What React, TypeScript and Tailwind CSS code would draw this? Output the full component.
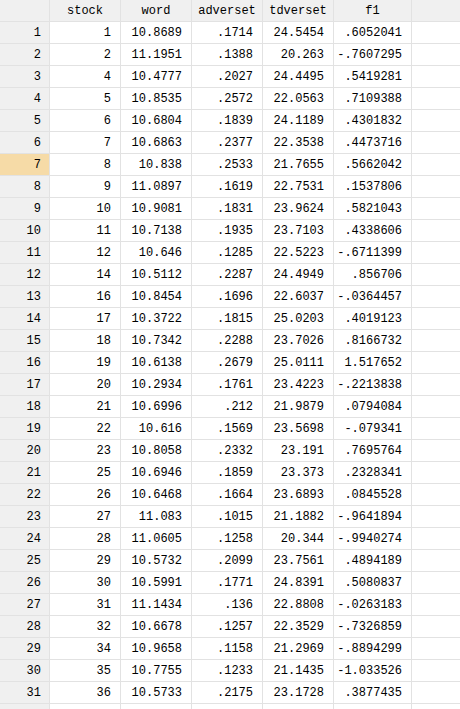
const columns = [
  { name: "stock", width: "w-[71px]" },
  { name: "word", width: "w-[71px]" },
  { name: "adverset", width: "w-[71px]" },
  { name: "tdverset", width: "w-[71px]" },
  { name: "f1", width: "w-[78px]" },
];

const rows: string[][] = [
  ["1", "10.8689", ".1714", "24.5454", ".6052041"],
  ["2", "11.1951", ".1388", "20.263", "-.7607295"],
  ["4", "10.4777", ".2027", "24.4495", ".5419281"],
  ["5", "10.8535", ".2572", "22.0563", ".7109388"],
  ["6", "10.6804", ".1839", "24.1189", ".4301832"],
  ["7", "10.6863", ".2377", "22.3538", ".4473716"],
  ["8", "10.838", ".2533", "21.7655", ".5662042"],
  ["9", "11.0897", ".1619", "22.7531", ".1537806"],
  ["10", "10.9081", ".1831", "23.9624", ".5821043"],
  ["11", "10.7138", ".1935", "23.7103", ".4338606"],
  ["12", "10.646", ".1285", "22.5223", "-.6711399"],
  ["14", "10.5112", ".2287", "24.4949", ".856706"],
  ["16", "10.8454", ".1696", "22.6037", "-.0364457"],
  ["17", "10.3722", ".1815", "25.0203", ".4019123"],
  ["18", "10.7342", ".2288", "23.7026", ".8166732"],
  ["19", "10.6138", ".2679", "25.0111", "1.517652"],
  ["20", "10.2934", ".1761", "23.4223", "-.2213838"],
  ["21", "10.6996", ".212", "21.9879", ".0794084"],
  ["22", "10.616", ".1569", "23.5698", "-.079341"],
  ["23", "10.8058", ".2332", "23.191", ".7695764"],
  ["25", "10.6946", ".1859", "23.373", ".2328341"],
  ["26", "10.6468", ".1664", "23.6893", ".0845528"],
  ["27", "11.083", ".1015", "21.1882", "-.9641894"],
  ["28", "11.0605", ".1258", "20.344", "-.9940274"],
  ["29", "10.5732", ".2099", "23.7561", ".4894189"],
  ["30", "10.5991", ".1771", "24.8391", ".5080837"],
  ["31", "11.1434", ".136", "22.8808", "-.0263183"],
  ["32", "10.6678", ".1257", "22.3529", "-.7326859"],
  ["34", "10.9658", ".1158", "21.2969", "-.8894299"],
  ["35", "10.7755", ".1233", "21.1435", "-1.033526"],
  ["36", "10.5733", ".2175", "23.1728", ".3877435"],
];

const selectedRow = 7;

export default function App() {
  return (
    <div className="w-[460px] h-[709px] overflow-hidden bg-white text-[12px] text-black font-mono">
      {/* Header */}
      <div className="flex h-[22px] bg-[#f0f0f0] border-b border-[#e2e2e2]">
        <div className="w-[50px] shrink-0 border-r border-[#e2e2e2]" />
        {columns.map((col) => (
          <div
            key={col.name}
            className={`${col.width} shrink-0 border-r border-[#e2e2e2] flex items-center justify-center`}
          >
            {col.name}
          </div>
        ))}
        <div className="flex-1" />
      </div>

      {/* Rows */}
      {rows.map((row, i) => (
        <div key={i} className="flex h-[22px] border-b border-[#e2e2e2]">
          <div
            className={`w-[50px] shrink-0 border-r border-[#e2e2e2] flex items-center justify-end pr-[8px] ${
              i + 1 === selectedRow ? "bg-[#f6dba7]" : "bg-[#f0f0f0]"
            }`}
          >
            {i + 1}
          </div>
          {row.map((val, j) => (
            <div
              key={j}
              className={`${columns[j].width} shrink-0 border-r border-[#e2e2e2] flex items-center justify-end pr-[9px]`}
            >
              {val}
            </div>
          ))}
          <div className="flex-1" />
        </div>
      ))}

      {/* partly visible empty row */}
      <div className="flex h-[22px]">
        <div className="w-[50px] shrink-0 border-r border-[#e2e2e2] bg-[#f0f0f0]" />
        {columns.map((col) => (
          <div key={col.name} className={`${col.width} shrink-0 border-r border-[#e2e2e2]`} />
        ))}
        <div className="flex-1" />
      </div>
    </div>
  );
}
